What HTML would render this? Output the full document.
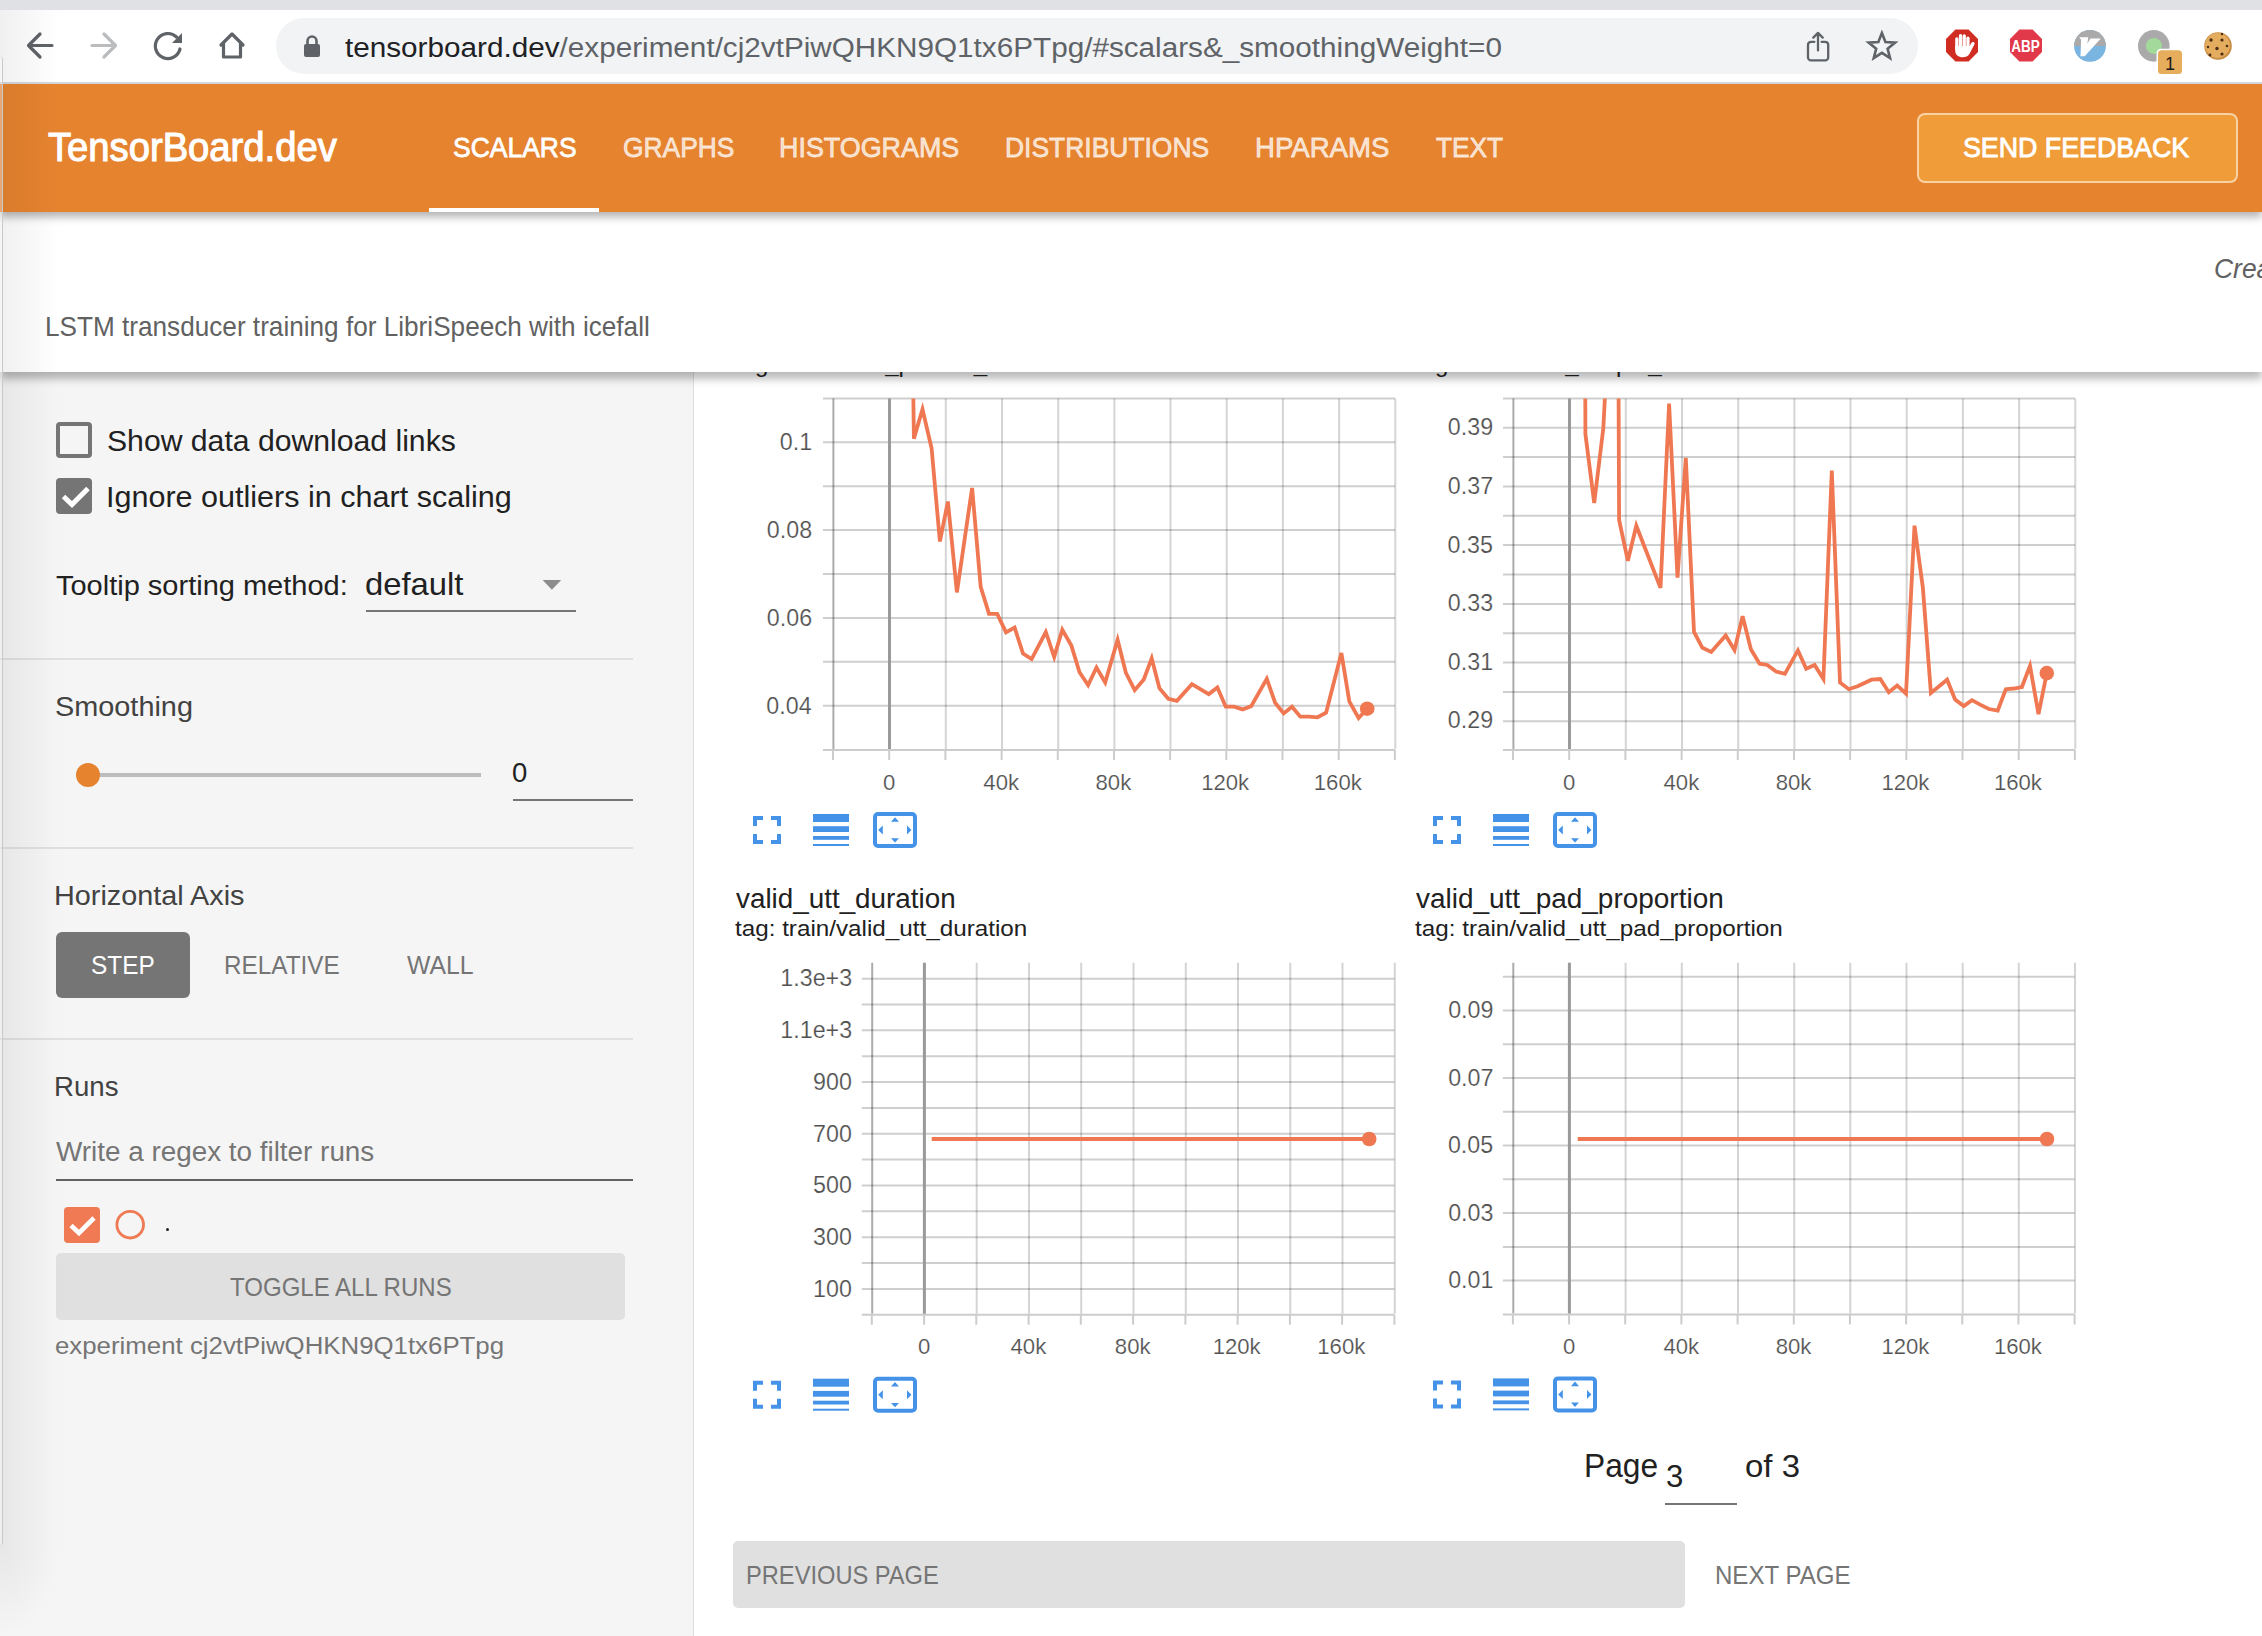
<!DOCTYPE html>
<html><head><meta charset="utf-8"><title>TensorBoard.dev</title>
<style>
html,body{margin:0;padding:0}
body{width:2262px;height:1636px;overflow:hidden;position:relative;background:#fff;font-family:"Liberation Sans",sans-serif}
.t{position:absolute;white-space:pre;transform-origin:0 0}
</style></head><body>
<svg style="position:absolute;left:0;top:0" width="2262" height="1636" viewBox="0 0 2262 1636"><line x1="833.4" y1="398.4" x2="833.4" y2="749.0" stroke="rgba(0,0,0,0.33)" stroke-width="2"/><line x1="833.0" y1="750.0" x2="833.0" y2="760.0" stroke="#cccccc" stroke-width="2"/><line x1="889.6" y1="398.4" x2="889.6" y2="749.0" stroke="rgba(0,0,0,0.17)" stroke-width="2"/><line x1="889.2" y1="750.0" x2="889.2" y2="760.0" stroke="#cccccc" stroke-width="2"/><line x1="945.8" y1="398.4" x2="945.8" y2="749.0" stroke="rgba(0,0,0,0.17)" stroke-width="2"/><line x1="945.4" y1="750.0" x2="945.4" y2="760.0" stroke="#cccccc" stroke-width="2"/><line x1="1002.0" y1="398.4" x2="1002.0" y2="749.0" stroke="rgba(0,0,0,0.17)" stroke-width="2"/><line x1="1001.6" y1="750.0" x2="1001.6" y2="760.0" stroke="#cccccc" stroke-width="2"/><line x1="1058.2" y1="398.4" x2="1058.2" y2="749.0" stroke="rgba(0,0,0,0.17)" stroke-width="2"/><line x1="1057.8" y1="750.0" x2="1057.8" y2="760.0" stroke="#cccccc" stroke-width="2"/><line x1="1114.4" y1="398.4" x2="1114.4" y2="749.0" stroke="rgba(0,0,0,0.17)" stroke-width="2"/><line x1="1114.0" y1="750.0" x2="1114.0" y2="760.0" stroke="#cccccc" stroke-width="2"/><line x1="1170.5" y1="398.4" x2="1170.5" y2="749.0" stroke="rgba(0,0,0,0.17)" stroke-width="2"/><line x1="1170.1" y1="750.0" x2="1170.1" y2="760.0" stroke="#cccccc" stroke-width="2"/><line x1="1226.7" y1="398.4" x2="1226.7" y2="749.0" stroke="rgba(0,0,0,0.17)" stroke-width="2"/><line x1="1226.3" y1="750.0" x2="1226.3" y2="760.0" stroke="#cccccc" stroke-width="2"/><line x1="1282.9" y1="398.4" x2="1282.9" y2="749.0" stroke="rgba(0,0,0,0.17)" stroke-width="2"/><line x1="1282.5" y1="750.0" x2="1282.5" y2="760.0" stroke="#cccccc" stroke-width="2"/><line x1="1339.1" y1="398.4" x2="1339.1" y2="749.0" stroke="rgba(0,0,0,0.17)" stroke-width="2"/><line x1="1338.7" y1="750.0" x2="1338.7" y2="760.0" stroke="#cccccc" stroke-width="2"/><line x1="1395.3" y1="398.4" x2="1395.3" y2="749.0" stroke="rgba(0,0,0,0.17)" stroke-width="2"/><line x1="1394.9" y1="750.0" x2="1394.9" y2="760.0" stroke="#cccccc" stroke-width="2"/><line x1="823.0" y1="398.4" x2="1395.0" y2="398.4" stroke="rgba(0,0,0,0.19)" stroke-width="2"/><line x1="823.0" y1="442.3" x2="1395.0" y2="442.3" stroke="rgba(0,0,0,0.19)" stroke-width="2"/><line x1="823.0" y1="486.2" x2="1395.0" y2="486.2" stroke="rgba(0,0,0,0.19)" stroke-width="2"/><line x1="823.0" y1="530.1" x2="1395.0" y2="530.1" stroke="rgba(0,0,0,0.19)" stroke-width="2"/><line x1="823.0" y1="574.0" x2="1395.0" y2="574.0" stroke="rgba(0,0,0,0.19)" stroke-width="2"/><line x1="823.0" y1="617.9" x2="1395.0" y2="617.9" stroke="rgba(0,0,0,0.19)" stroke-width="2"/><line x1="823.0" y1="661.8" x2="1395.0" y2="661.8" stroke="rgba(0,0,0,0.19)" stroke-width="2"/><line x1="823.0" y1="705.7" x2="1395.0" y2="705.7" stroke="rgba(0,0,0,0.19)" stroke-width="2"/><line x1="823.0" y1="750.0" x2="1395.0" y2="750.0" stroke="#cccccc" stroke-width="2"/><line x1="889.5" y1="398.4" x2="889.5" y2="749.0" stroke="#9a9a9a" stroke-width="3"/><clipPath id="clip32"><rect x="833" y="398.4" width="562" height="351.6"/></clipPath><polyline clip-path="url(#clip32)" points="912.0,300.0 913.9,438.6 922.5,409.2 931.6,448.4 939.9,541.5 947.9,501.5 956.9,592.4 972.1,487.9 980.7,586.8 989.0,613.9 997.2,613.9 1006.0,632.4 1014.6,627.5 1023.0,653.5 1031.6,659.1 1045.8,632.0 1054.2,656.9 1062.3,629.7 1071.4,645.6 1079.5,672.3 1088.1,685.1 1096.5,667.5 1105.2,682.5 1117.6,639.8 1125.9,672.9 1134.7,690.2 1143.8,679.5 1151.7,658.3 1159.4,688.2 1168.3,698.8 1176.9,700.8 1191.9,684.2 1208.8,694.1 1217.4,687.5 1225.7,706.7 1234.0,706.7 1242.6,709.4 1251.2,706.1 1266.8,678.9 1275.1,702.7 1283.7,713.4 1292.0,706.7 1300.3,716.7 1308.9,716.7 1317.5,717.3 1326.1,712.7 1341.4,653.0 1349.3,701.4 1358.6,718.0 1367.2,708.7" fill="none" stroke="#ef7852" stroke-width="3.8" stroke-linejoin="miter" stroke-miterlimit="4"/><circle cx="1367.2" cy="708.7" r="7.3" fill="#ef7852"/><path d="M753,816h10v4h-6v6h-4z M781,816h-10v4h6v6h4z M753,844h10v-4h-6v-6h-4z M781,844h-10v-4h6v-6h4z" fill="#4493e8"/><rect x="813" y="814" width="36" height="8" fill="#4493e8"/><rect x="813" y="826.2" width="36" height="5.8" fill="#4493e8"/><rect x="813" y="836" width="36" height="3.8" fill="#4493e8"/><rect x="813" y="844" width="36" height="2" fill="#4493e8"/><rect x="875" y="814" width="40" height="32" rx="3" fill="none" stroke="#4493e8" stroke-width="4"/><path d="M891,821.8l4,-4.6l4,4.6z M891,838.2l4,4.4l4,-4.4z M878.2,830l4.6,-4.5v9z M911.4,830l-4.4,-4.5v9z" fill="#4493e8"/><line x1="1513.4" y1="398.4" x2="1513.4" y2="749.0" stroke="rgba(0,0,0,0.33)" stroke-width="2"/><line x1="1513.0" y1="750.0" x2="1513.0" y2="760.0" stroke="#cccccc" stroke-width="2"/><line x1="1569.6" y1="398.4" x2="1569.6" y2="749.0" stroke="rgba(0,0,0,0.17)" stroke-width="2"/><line x1="1569.2" y1="750.0" x2="1569.2" y2="760.0" stroke="#cccccc" stroke-width="2"/><line x1="1625.8" y1="398.4" x2="1625.8" y2="749.0" stroke="rgba(0,0,0,0.17)" stroke-width="2"/><line x1="1625.4" y1="750.0" x2="1625.4" y2="760.0" stroke="#cccccc" stroke-width="2"/><line x1="1682.0" y1="398.4" x2="1682.0" y2="749.0" stroke="rgba(0,0,0,0.17)" stroke-width="2"/><line x1="1681.6" y1="750.0" x2="1681.6" y2="760.0" stroke="#cccccc" stroke-width="2"/><line x1="1738.2" y1="398.4" x2="1738.2" y2="749.0" stroke="rgba(0,0,0,0.17)" stroke-width="2"/><line x1="1737.8" y1="750.0" x2="1737.8" y2="760.0" stroke="#cccccc" stroke-width="2"/><line x1="1794.4" y1="398.4" x2="1794.4" y2="749.0" stroke="rgba(0,0,0,0.17)" stroke-width="2"/><line x1="1794.0" y1="750.0" x2="1794.0" y2="760.0" stroke="#cccccc" stroke-width="2"/><line x1="1850.5" y1="398.4" x2="1850.5" y2="749.0" stroke="rgba(0,0,0,0.17)" stroke-width="2"/><line x1="1850.1" y1="750.0" x2="1850.1" y2="760.0" stroke="#cccccc" stroke-width="2"/><line x1="1906.7" y1="398.4" x2="1906.7" y2="749.0" stroke="rgba(0,0,0,0.17)" stroke-width="2"/><line x1="1906.3" y1="750.0" x2="1906.3" y2="760.0" stroke="#cccccc" stroke-width="2"/><line x1="1962.9" y1="398.4" x2="1962.9" y2="749.0" stroke="rgba(0,0,0,0.17)" stroke-width="2"/><line x1="1962.5" y1="750.0" x2="1962.5" y2="760.0" stroke="#cccccc" stroke-width="2"/><line x1="2019.1" y1="398.4" x2="2019.1" y2="749.0" stroke="rgba(0,0,0,0.17)" stroke-width="2"/><line x1="2018.7" y1="750.0" x2="2018.7" y2="760.0" stroke="#cccccc" stroke-width="2"/><line x1="2075.3" y1="398.4" x2="2075.3" y2="749.0" stroke="rgba(0,0,0,0.17)" stroke-width="2"/><line x1="2074.9" y1="750.0" x2="2074.9" y2="760.0" stroke="#cccccc" stroke-width="2"/><line x1="1503.0" y1="398.4" x2="2075.0" y2="398.4" stroke="rgba(0,0,0,0.19)" stroke-width="2"/><line x1="1503.0" y1="427.8" x2="2075.0" y2="427.8" stroke="rgba(0,0,0,0.19)" stroke-width="2"/><line x1="1503.0" y1="457.1" x2="2075.0" y2="457.1" stroke="rgba(0,0,0,0.19)" stroke-width="2"/><line x1="1503.0" y1="486.4" x2="2075.0" y2="486.4" stroke="rgba(0,0,0,0.19)" stroke-width="2"/><line x1="1503.0" y1="515.8" x2="2075.0" y2="515.8" stroke="rgba(0,0,0,0.19)" stroke-width="2"/><line x1="1503.0" y1="545.1" x2="2075.0" y2="545.1" stroke="rgba(0,0,0,0.19)" stroke-width="2"/><line x1="1503.0" y1="574.5" x2="2075.0" y2="574.5" stroke="rgba(0,0,0,0.19)" stroke-width="2"/><line x1="1503.0" y1="603.9" x2="2075.0" y2="603.9" stroke="rgba(0,0,0,0.19)" stroke-width="2"/><line x1="1503.0" y1="633.2" x2="2075.0" y2="633.2" stroke="rgba(0,0,0,0.19)" stroke-width="2"/><line x1="1503.0" y1="662.5" x2="2075.0" y2="662.5" stroke="rgba(0,0,0,0.19)" stroke-width="2"/><line x1="1503.0" y1="691.9" x2="2075.0" y2="691.9" stroke="rgba(0,0,0,0.19)" stroke-width="2"/><line x1="1503.0" y1="721.2" x2="2075.0" y2="721.2" stroke="rgba(0,0,0,0.19)" stroke-width="2"/><line x1="1503.0" y1="750.0" x2="2075.0" y2="750.0" stroke="#cccccc" stroke-width="2"/><line x1="1569.5" y1="398.4" x2="1569.5" y2="749.0" stroke="#9a9a9a" stroke-width="3"/><clipPath id="clip72"><rect x="1513" y="398.4" width="562" height="351.6"/></clipPath><polyline clip-path="url(#clip72)" points="1585.0,300.0 1585.4,434.1 1594.2,503.1 1603.3,428.4 1610.0,300.0 1618.2,300.0 1619.1,520.0 1627.9,560.8 1636.3,525.7 1660.5,587.9 1669.1,403.6 1677.5,577.7 1685.8,457.8 1694.0,632.0 1702.4,647.8 1711.2,651.9 1725.7,635.4 1734.5,650.1 1742.6,616.2 1751.0,649.6 1759.6,663.7 1767.3,665.0 1776.1,671.6 1784.9,673.8 1797.9,650.4 1806.2,668.7 1814.6,665.0 1823.4,679.0 1831.8,470.5 1840.0,682.6 1848.8,689.2 1857.6,686.3 1871.5,679.7 1880.3,679.0 1888.8,692.2 1897.2,685.6 1906.0,693.6 1914.5,525.7 1922.9,588.0 1930.9,692.9 1947.1,679.7 1955.1,699.5 1963.7,706.1 1972.0,700.2 1980.1,704.6 1988.9,709.0 1997.7,710.5 2005.8,689.2 2013.8,688.5 2021.9,687.0 2030.0,665.8 2038.5,714.2 2046.8,673.1" fill="none" stroke="#ef7852" stroke-width="3.8" stroke-linejoin="miter" stroke-miterlimit="4"/><circle cx="2046.8" cy="673.1" r="7.3" fill="#ef7852"/><path d="M1433,816h10v4h-6v6h-4z M1461,816h-10v4h6v6h4z M1433,844h10v-4h-6v-6h-4z M1461,844h-10v-4h6v-6h4z" fill="#4493e8"/><rect x="1493" y="814" width="36" height="8" fill="#4493e8"/><rect x="1493" y="826.2" width="36" height="5.8" fill="#4493e8"/><rect x="1493" y="836" width="36" height="3.8" fill="#4493e8"/><rect x="1493" y="844" width="36" height="2" fill="#4493e8"/><rect x="1555" y="814" width="40" height="32" rx="3" fill="none" stroke="#4493e8" stroke-width="4"/><path d="M1571,821.8l4,-4.6l4,4.6z M1571,838.2l4,4.4l4,-4.4z M1558.2,830l4.6,-4.5v9z M1591.4,830l-4.4,-4.5v9z" fill="#4493e8"/><line x1="872.2" y1="962.8" x2="872.2" y2="1313.7" stroke="rgba(0,0,0,0.33)" stroke-width="2"/><line x1="871.8" y1="1314.7" x2="871.8" y2="1324.7" stroke="#cccccc" stroke-width="2"/><line x1="924.5" y1="962.8" x2="924.5" y2="1313.7" stroke="rgba(0,0,0,0.17)" stroke-width="2"/><line x1="924.1" y1="1314.7" x2="924.1" y2="1324.7" stroke="#cccccc" stroke-width="2"/><line x1="976.7" y1="962.8" x2="976.7" y2="1313.7" stroke="rgba(0,0,0,0.17)" stroke-width="2"/><line x1="976.3" y1="1314.7" x2="976.3" y2="1324.7" stroke="#cccccc" stroke-width="2"/><line x1="1029.0" y1="962.8" x2="1029.0" y2="1313.7" stroke="rgba(0,0,0,0.17)" stroke-width="2"/><line x1="1028.6" y1="1314.7" x2="1028.6" y2="1324.7" stroke="#cccccc" stroke-width="2"/><line x1="1081.2" y1="962.8" x2="1081.2" y2="1313.7" stroke="rgba(0,0,0,0.17)" stroke-width="2"/><line x1="1080.8" y1="1314.7" x2="1080.8" y2="1324.7" stroke="#cccccc" stroke-width="2"/><line x1="1133.5" y1="962.8" x2="1133.5" y2="1313.7" stroke="rgba(0,0,0,0.17)" stroke-width="2"/><line x1="1133.1" y1="1314.7" x2="1133.1" y2="1324.7" stroke="#cccccc" stroke-width="2"/><line x1="1185.8" y1="962.8" x2="1185.8" y2="1313.7" stroke="rgba(0,0,0,0.17)" stroke-width="2"/><line x1="1185.4" y1="1314.7" x2="1185.4" y2="1324.7" stroke="#cccccc" stroke-width="2"/><line x1="1238.0" y1="962.8" x2="1238.0" y2="1313.7" stroke="rgba(0,0,0,0.17)" stroke-width="2"/><line x1="1237.6" y1="1314.7" x2="1237.6" y2="1324.7" stroke="#cccccc" stroke-width="2"/><line x1="1290.3" y1="962.8" x2="1290.3" y2="1313.7" stroke="rgba(0,0,0,0.17)" stroke-width="2"/><line x1="1289.9" y1="1314.7" x2="1289.9" y2="1324.7" stroke="#cccccc" stroke-width="2"/><line x1="1342.5" y1="962.8" x2="1342.5" y2="1313.7" stroke="rgba(0,0,0,0.17)" stroke-width="2"/><line x1="1342.1" y1="1314.7" x2="1342.1" y2="1324.7" stroke="#cccccc" stroke-width="2"/><line x1="1394.8" y1="962.8" x2="1394.8" y2="1313.7" stroke="rgba(0,0,0,0.17)" stroke-width="2"/><line x1="1394.4" y1="1314.7" x2="1394.4" y2="1324.7" stroke="#cccccc" stroke-width="2"/><line x1="861.8" y1="1288.9" x2="1394.4" y2="1288.9" stroke="rgba(0,0,0,0.19)" stroke-width="2"/><line x1="861.8" y1="1263.0" x2="1394.4" y2="1263.0" stroke="rgba(0,0,0,0.19)" stroke-width="2"/><line x1="861.8" y1="1237.2" x2="1394.4" y2="1237.2" stroke="rgba(0,0,0,0.19)" stroke-width="2"/><line x1="861.8" y1="1211.3" x2="1394.4" y2="1211.3" stroke="rgba(0,0,0,0.19)" stroke-width="2"/><line x1="861.8" y1="1185.5" x2="1394.4" y2="1185.5" stroke="rgba(0,0,0,0.19)" stroke-width="2"/><line x1="861.8" y1="1159.6" x2="1394.4" y2="1159.6" stroke="rgba(0,0,0,0.19)" stroke-width="2"/><line x1="861.8" y1="1133.8" x2="1394.4" y2="1133.8" stroke="rgba(0,0,0,0.19)" stroke-width="2"/><line x1="861.8" y1="1107.9" x2="1394.4" y2="1107.9" stroke="rgba(0,0,0,0.19)" stroke-width="2"/><line x1="861.8" y1="1082.0" x2="1394.4" y2="1082.0" stroke="rgba(0,0,0,0.19)" stroke-width="2"/><line x1="861.8" y1="1056.2" x2="1394.4" y2="1056.2" stroke="rgba(0,0,0,0.19)" stroke-width="2"/><line x1="861.8" y1="1030.3" x2="1394.4" y2="1030.3" stroke="rgba(0,0,0,0.19)" stroke-width="2"/><line x1="861.8" y1="1004.5" x2="1394.4" y2="1004.5" stroke="rgba(0,0,0,0.19)" stroke-width="2"/><line x1="861.8" y1="978.7" x2="1394.4" y2="978.7" stroke="rgba(0,0,0,0.19)" stroke-width="2"/><line x1="861.8" y1="1314.7" x2="1394.4" y2="1314.7" stroke="#cccccc" stroke-width="2"/><line x1="924.4" y1="962.8" x2="924.4" y2="1313.7" stroke="#9a9a9a" stroke-width="3"/><clipPath id="clip113"><rect x="871.8" y="962.8" width="522.6000000000001" height="351.9000000000001"/></clipPath><polyline clip-path="url(#clip113)" points="931.7,1139.0 1369.2,1139.0" fill="none" stroke="#ef7852" stroke-width="3.8" stroke-linejoin="miter" stroke-miterlimit="4"/><circle cx="1369.2" cy="1139.0" r="7.3" fill="#ef7852"/><path d="M753,1380.7h10v4h-6v6h-4z M781,1380.7h-10v4h6v6h4z M753,1408.7h10v-4h-6v-6h-4z M781,1408.7h-10v-4h6v-6h4z" fill="#4493e8"/><rect x="813" y="1378.7" width="36" height="8" fill="#4493e8"/><rect x="813" y="1390.9" width="36" height="5.8" fill="#4493e8"/><rect x="813" y="1400.7" width="36" height="3.8" fill="#4493e8"/><rect x="813" y="1408.7" width="36" height="2" fill="#4493e8"/><rect x="875" y="1378.7" width="40" height="32" rx="3" fill="none" stroke="#4493e8" stroke-width="4"/><path d="M891,1386.5l4,-4.6l4,4.6z M891,1402.9l4,4.4l4,-4.4z M878.2,1394.7l4.6,-4.5v9z M911.4,1394.7l-4.4,-4.5v9z" fill="#4493e8"/><line x1="1513.3" y1="962.8" x2="1513.3" y2="1313.4" stroke="rgba(0,0,0,0.33)" stroke-width="2"/><line x1="1512.9" y1="1314.4" x2="1512.9" y2="1324.4" stroke="#cccccc" stroke-width="2"/><line x1="1569.5" y1="962.8" x2="1569.5" y2="1313.4" stroke="rgba(0,0,0,0.17)" stroke-width="2"/><line x1="1569.1" y1="1314.4" x2="1569.1" y2="1324.4" stroke="#cccccc" stroke-width="2"/><line x1="1625.6" y1="962.8" x2="1625.6" y2="1313.4" stroke="rgba(0,0,0,0.17)" stroke-width="2"/><line x1="1625.2" y1="1314.4" x2="1625.2" y2="1324.4" stroke="#cccccc" stroke-width="2"/><line x1="1681.8" y1="962.8" x2="1681.8" y2="1313.4" stroke="rgba(0,0,0,0.17)" stroke-width="2"/><line x1="1681.4" y1="1314.4" x2="1681.4" y2="1324.4" stroke="#cccccc" stroke-width="2"/><line x1="1738.0" y1="962.8" x2="1738.0" y2="1313.4" stroke="rgba(0,0,0,0.17)" stroke-width="2"/><line x1="1737.6" y1="1314.4" x2="1737.6" y2="1324.4" stroke="#cccccc" stroke-width="2"/><line x1="1794.2" y1="962.8" x2="1794.2" y2="1313.4" stroke="rgba(0,0,0,0.17)" stroke-width="2"/><line x1="1793.8" y1="1314.4" x2="1793.8" y2="1324.4" stroke="#cccccc" stroke-width="2"/><line x1="1850.3" y1="962.8" x2="1850.3" y2="1313.4" stroke="rgba(0,0,0,0.17)" stroke-width="2"/><line x1="1849.9" y1="1314.4" x2="1849.9" y2="1324.4" stroke="#cccccc" stroke-width="2"/><line x1="1906.5" y1="962.8" x2="1906.5" y2="1313.4" stroke="rgba(0,0,0,0.17)" stroke-width="2"/><line x1="1906.1" y1="1314.4" x2="1906.1" y2="1324.4" stroke="#cccccc" stroke-width="2"/><line x1="1962.7" y1="962.8" x2="1962.7" y2="1313.4" stroke="rgba(0,0,0,0.17)" stroke-width="2"/><line x1="1962.3" y1="1314.4" x2="1962.3" y2="1324.4" stroke="#cccccc" stroke-width="2"/><line x1="2018.8" y1="962.8" x2="2018.8" y2="1313.4" stroke="rgba(0,0,0,0.17)" stroke-width="2"/><line x1="2018.4" y1="1314.4" x2="2018.4" y2="1324.4" stroke="#cccccc" stroke-width="2"/><line x1="2075.0" y1="962.8" x2="2075.0" y2="1313.4" stroke="rgba(0,0,0,0.17)" stroke-width="2"/><line x1="2074.6" y1="1314.4" x2="2074.6" y2="1324.4" stroke="#cccccc" stroke-width="2"/><line x1="1502.9" y1="1280.6" x2="2074.6" y2="1280.6" stroke="rgba(0,0,0,0.19)" stroke-width="2"/><line x1="1502.9" y1="1246.9" x2="2074.6" y2="1246.9" stroke="rgba(0,0,0,0.19)" stroke-width="2"/><line x1="1502.9" y1="1213.1" x2="2074.6" y2="1213.1" stroke="rgba(0,0,0,0.19)" stroke-width="2"/><line x1="1502.9" y1="1179.3" x2="2074.6" y2="1179.3" stroke="rgba(0,0,0,0.19)" stroke-width="2"/><line x1="1502.9" y1="1145.6" x2="2074.6" y2="1145.6" stroke="rgba(0,0,0,0.19)" stroke-width="2"/><line x1="1502.9" y1="1111.8" x2="2074.6" y2="1111.8" stroke="rgba(0,0,0,0.19)" stroke-width="2"/><line x1="1502.9" y1="1078.0" x2="2074.6" y2="1078.0" stroke="rgba(0,0,0,0.19)" stroke-width="2"/><line x1="1502.9" y1="1044.2" x2="2074.6" y2="1044.2" stroke="rgba(0,0,0,0.19)" stroke-width="2"/><line x1="1502.9" y1="1010.5" x2="2074.6" y2="1010.5" stroke="rgba(0,0,0,0.19)" stroke-width="2"/><line x1="1502.9" y1="976.7" x2="2074.6" y2="976.7" stroke="rgba(0,0,0,0.19)" stroke-width="2"/><line x1="1502.9" y1="1314.4" x2="2074.6" y2="1314.4" stroke="#cccccc" stroke-width="2"/><line x1="1569.4" y1="962.8" x2="1569.4" y2="1313.4" stroke="#9a9a9a" stroke-width="3"/><clipPath id="clip151"><rect x="1512.9" y="962.8" width="561.6999999999998" height="351.60000000000014"/></clipPath><polyline clip-path="url(#clip151)" points="1577.7,1139.0 2047.0,1139.0" fill="none" stroke="#ef7852" stroke-width="3.8" stroke-linejoin="miter" stroke-miterlimit="4"/><circle cx="2047.0" cy="1139.0" r="7.3" fill="#ef7852"/><path d="M1433,1380.4h10v4h-6v6h-4z M1461,1380.4h-10v4h6v6h4z M1433,1408.4h10v-4h-6v-6h-4z M1461,1408.4h-10v-4h6v-6h4z" fill="#4493e8"/><rect x="1493" y="1378.4" width="36" height="8" fill="#4493e8"/><rect x="1493" y="1390.6000000000001" width="36" height="5.8" fill="#4493e8"/><rect x="1493" y="1400.4" width="36" height="3.8" fill="#4493e8"/><rect x="1493" y="1408.4" width="36" height="2" fill="#4493e8"/><rect x="1555" y="1378.4" width="40" height="32" rx="3" fill="none" stroke="#4493e8" stroke-width="4"/><path d="M1571,1386.2l4,-4.6l4,4.6z M1571,1402.6000000000001l4,4.4l4,-4.4z M1558.2,1394.4l4.6,-4.5v9z M1591.4,1394.4l-4.4,-4.5v9z" fill="#4493e8"/></svg>
<div style="position:absolute;left:1665px;top:1503px;width:72px;height:2px;background:#757575"></div>
<div style="position:absolute;left:733px;top:1541px;width:952px;height:67px;background:#e0e0e0;border-radius:5px"></div>
<div class="t" style="left:736.00px;top:320.14px;font-size:27.70px;line-height:27.70px;color:#212121;font-weight:400;transform:scaleX(1.0000);">valid_pruned_loss</div>
<div class="t" style="left:735.36px;top:352.95px;font-size:22.97px;line-height:22.97px;color:#212121;font-weight:400;transform:scaleX(1.0500);">tag: train/valid_pruned_loss</div>
<div class="t" style="left:779.85px;top:430.81px;font-size:23.25px;line-height:23.25px;color:#505050;font-weight:400;transform:scaleX(1.0000);-webkit-text-stroke:0.2px #fff;">0.1</div>
<div class="t" style="left:766.83px;top:518.81px;font-size:23.25px;line-height:23.25px;color:#505050;font-weight:400;transform:scaleX(1.0000);-webkit-text-stroke:0.2px #fff;">0.08</div>
<div class="t" style="left:766.83px;top:606.81px;font-size:23.25px;line-height:23.25px;color:#505050;font-weight:400;transform:scaleX(1.0000);-webkit-text-stroke:0.2px #fff;">0.06</div>
<div class="t" style="left:766.36px;top:694.81px;font-size:23.25px;line-height:23.25px;color:#505050;font-weight:400;transform:scaleX(1.0000);-webkit-text-stroke:0.2px #fff;">0.04</div>
<div class="t" style="left:883.00px;top:771.56px;font-size:22.13px;line-height:22.13px;color:#505050;font-weight:400;transform:scaleX(1.0000);-webkit-text-stroke:0.2px #fff;">0</div>
<div class="t" style="left:983.36px;top:771.56px;font-size:22.13px;line-height:22.13px;color:#505050;font-weight:400;transform:scaleX(1.0000);-webkit-text-stroke:0.2px #fff;">40k</div>
<div class="t" style="left:1095.54px;top:771.56px;font-size:22.13px;line-height:22.13px;color:#505050;font-weight:400;transform:scaleX(1.0000);-webkit-text-stroke:0.2px #fff;">80k</div>
<div class="t" style="left:1201.21px;top:771.56px;font-size:22.13px;line-height:22.13px;color:#505050;font-weight:400;transform:scaleX(1.0000);-webkit-text-stroke:0.2px #fff;">120k</div>
<div class="t" style="left:1313.81px;top:771.56px;font-size:22.13px;line-height:22.13px;color:#505050;font-weight:400;transform:scaleX(1.0000);-webkit-text-stroke:0.2px #fff;">160k</div>
<div class="t" style="left:1416.00px;top:320.14px;font-size:27.70px;line-height:27.70px;color:#212121;font-weight:400;transform:scaleX(1.0000);">valid_simple_loss</div>
<div class="t" style="left:1415.36px;top:352.95px;font-size:22.97px;line-height:22.97px;color:#212121;font-weight:400;transform:scaleX(1.0500);">tag: train/valid_simple_loss</div>
<div class="t" style="left:1447.83px;top:415.91px;font-size:23.25px;line-height:23.25px;color:#505050;font-weight:400;transform:scaleX(1.0000);-webkit-text-stroke:0.2px #fff;">0.39</div>
<div class="t" style="left:1447.83px;top:474.71px;font-size:23.25px;line-height:23.25px;color:#505050;font-weight:400;transform:scaleX(1.0000);-webkit-text-stroke:0.2px #fff;">0.37</div>
<div class="t" style="left:1447.59px;top:533.51px;font-size:23.25px;line-height:23.25px;color:#505050;font-weight:400;transform:scaleX(1.0000);-webkit-text-stroke:0.2px #fff;">0.35</div>
<div class="t" style="left:1447.83px;top:592.01px;font-size:23.25px;line-height:23.25px;color:#505050;font-weight:400;transform:scaleX(1.0000);-webkit-text-stroke:0.2px #fff;">0.33</div>
<div class="t" style="left:1447.83px;top:650.51px;font-size:23.25px;line-height:23.25px;color:#505050;font-weight:400;transform:scaleX(1.0000);-webkit-text-stroke:0.2px #fff;">0.31</div>
<div class="t" style="left:1447.83px;top:709.31px;font-size:23.25px;line-height:23.25px;color:#505050;font-weight:400;transform:scaleX(1.0000);-webkit-text-stroke:0.2px #fff;">0.29</div>
<div class="t" style="left:1563.00px;top:771.56px;font-size:22.13px;line-height:22.13px;color:#505050;font-weight:400;transform:scaleX(1.0000);-webkit-text-stroke:0.2px #fff;">0</div>
<div class="t" style="left:1663.56px;top:771.56px;font-size:22.13px;line-height:22.13px;color:#505050;font-weight:400;transform:scaleX(1.0000);-webkit-text-stroke:0.2px #fff;">40k</div>
<div class="t" style="left:1775.64px;top:771.56px;font-size:22.13px;line-height:22.13px;color:#505050;font-weight:400;transform:scaleX(1.0000);-webkit-text-stroke:0.2px #fff;">80k</div>
<div class="t" style="left:1881.41px;top:771.56px;font-size:22.13px;line-height:22.13px;color:#505050;font-weight:400;transform:scaleX(1.0000);-webkit-text-stroke:0.2px #fff;">120k</div>
<div class="t" style="left:1993.91px;top:771.56px;font-size:22.13px;line-height:22.13px;color:#505050;font-weight:400;transform:scaleX(1.0000);-webkit-text-stroke:0.2px #fff;">160k</div>
<div class="t" style="left:736.00px;top:884.54px;font-size:27.70px;line-height:27.70px;color:#212121;font-weight:400;transform:scaleX(1.0050);">valid_utt_duration</div>
<div class="t" style="left:735.36px;top:917.35px;font-size:22.97px;line-height:22.97px;color:#212121;font-weight:400;transform:scaleX(1.0547);">tag: train/valid_utt_duration</div>
<div class="t" style="left:780.32px;top:967.41px;font-size:23.25px;line-height:23.25px;color:#505050;font-weight:400;transform:scaleX(1.0000);-webkit-text-stroke:0.2px #fff;">1.3e+3</div>
<div class="t" style="left:780.32px;top:1019.11px;font-size:23.25px;line-height:23.25px;color:#505050;font-weight:400;transform:scaleX(1.0000);-webkit-text-stroke:0.2px #fff;">1.1e+3</div>
<div class="t" style="left:813.10px;top:1070.81px;font-size:23.25px;line-height:23.25px;color:#505050;font-weight:400;transform:scaleX(1.0000);-webkit-text-stroke:0.2px #fff;">900</div>
<div class="t" style="left:813.10px;top:1122.51px;font-size:23.25px;line-height:23.25px;color:#505050;font-weight:400;transform:scaleX(1.0000);-webkit-text-stroke:0.2px #fff;">700</div>
<div class="t" style="left:813.10px;top:1174.21px;font-size:23.25px;line-height:23.25px;color:#505050;font-weight:400;transform:scaleX(1.0000);-webkit-text-stroke:0.2px #fff;">500</div>
<div class="t" style="left:813.10px;top:1225.91px;font-size:23.25px;line-height:23.25px;color:#505050;font-weight:400;transform:scaleX(1.0000);-webkit-text-stroke:0.2px #fff;">300</div>
<div class="t" style="left:813.10px;top:1277.71px;font-size:23.25px;line-height:23.25px;color:#505050;font-weight:400;transform:scaleX(1.0000);-webkit-text-stroke:0.2px #fff;">100</div>
<div class="t" style="left:917.90px;top:1336.26px;font-size:22.13px;line-height:22.13px;color:#505050;font-weight:400;transform:scaleX(1.0000);-webkit-text-stroke:0.2px #fff;">0</div>
<div class="t" style="left:1010.56px;top:1336.26px;font-size:22.13px;line-height:22.13px;color:#505050;font-weight:400;transform:scaleX(1.0000);-webkit-text-stroke:0.2px #fff;">40k</div>
<div class="t" style="left:1114.84px;top:1336.26px;font-size:22.13px;line-height:22.13px;color:#505050;font-weight:400;transform:scaleX(1.0000);-webkit-text-stroke:0.2px #fff;">80k</div>
<div class="t" style="left:1212.71px;top:1336.26px;font-size:22.13px;line-height:22.13px;color:#505050;font-weight:400;transform:scaleX(1.0000);-webkit-text-stroke:0.2px #fff;">120k</div>
<div class="t" style="left:1317.31px;top:1336.26px;font-size:22.13px;line-height:22.13px;color:#505050;font-weight:400;transform:scaleX(1.0000);-webkit-text-stroke:0.2px #fff;">160k</div>
<div class="t" style="left:1416.00px;top:884.54px;font-size:27.70px;line-height:27.70px;color:#212121;font-weight:400;transform:scaleX(1.0097);">valid_utt_pad_proportion</div>
<div class="t" style="left:1415.36px;top:917.35px;font-size:22.97px;line-height:22.97px;color:#212121;font-weight:400;transform:scaleX(1.0551);">tag: train/valid_utt_pad_proportion</div>
<div class="t" style="left:1448.13px;top:999.31px;font-size:23.25px;line-height:23.25px;color:#505050;font-weight:400;transform:scaleX(1.0000);-webkit-text-stroke:0.2px #fff;">0.09</div>
<div class="t" style="left:1448.13px;top:1066.61px;font-size:23.25px;line-height:23.25px;color:#505050;font-weight:400;transform:scaleX(1.0000);-webkit-text-stroke:0.2px #fff;">0.07</div>
<div class="t" style="left:1447.89px;top:1134.21px;font-size:23.25px;line-height:23.25px;color:#505050;font-weight:400;transform:scaleX(1.0000);-webkit-text-stroke:0.2px #fff;">0.05</div>
<div class="t" style="left:1448.13px;top:1201.81px;font-size:23.25px;line-height:23.25px;color:#505050;font-weight:400;transform:scaleX(1.0000);-webkit-text-stroke:0.2px #fff;">0.03</div>
<div class="t" style="left:1448.13px;top:1269.41px;font-size:23.25px;line-height:23.25px;color:#505050;font-weight:400;transform:scaleX(1.0000);-webkit-text-stroke:0.2px #fff;">0.01</div>
<div class="t" style="left:1562.90px;top:1335.96px;font-size:22.13px;line-height:22.13px;color:#505050;font-weight:400;transform:scaleX(1.0000);-webkit-text-stroke:0.2px #fff;">0</div>
<div class="t" style="left:1663.46px;top:1335.96px;font-size:22.13px;line-height:22.13px;color:#505050;font-weight:400;transform:scaleX(1.0000);-webkit-text-stroke:0.2px #fff;">40k</div>
<div class="t" style="left:1775.64px;top:1335.96px;font-size:22.13px;line-height:22.13px;color:#505050;font-weight:400;transform:scaleX(1.0000);-webkit-text-stroke:0.2px #fff;">80k</div>
<div class="t" style="left:1881.41px;top:1335.96px;font-size:22.13px;line-height:22.13px;color:#505050;font-weight:400;transform:scaleX(1.0000);-webkit-text-stroke:0.2px #fff;">120k</div>
<div class="t" style="left:1993.91px;top:1335.96px;font-size:22.13px;line-height:22.13px;color:#505050;font-weight:400;transform:scaleX(1.0000);-webkit-text-stroke:0.2px #fff;">160k</div>
<div class="t" style="left:1583.96px;top:1449.73px;font-size:32.68px;line-height:32.68px;color:#212121;font-weight:400;transform:scaleX(0.9707);">Page</div>
<div class="t" style="left:1665.56px;top:1461.17px;font-size:31.69px;line-height:31.69px;color:#212121;font-weight:400;transform:scaleX(0.9802);">3</div>
<div class="t" style="left:1744.98px;top:1450.85px;font-size:31.35px;line-height:31.35px;color:#212121;font-weight:400;transform:scaleX(1.0512);">of 3</div>
<div class="t" style="left:746.11px;top:1562.02px;font-size:26.20px;line-height:26.20px;color:#757575;font-weight:400;transform:scaleX(0.9032);">PREVIOUS PAGE</div>
<div class="t" style="left:1714.57px;top:1562.02px;font-size:26.20px;line-height:26.20px;color:#757575;font-weight:400;transform:scaleX(0.9186);">NEXT PAGE</div>
<div style="position:absolute;left:0px;top:372px;width:694px;height:1264px;background:#f5f5f5;border-right:1px solid #dedede;box-sizing:border-box"></div>
<div style="position:absolute;left:56px;top:422px;width:36px;height:36px;border:4px solid #757575;border-radius:4px;box-sizing:border-box"></div>
<div style="position:absolute;left:56px;top:478px;width:36px;height:36px;background:#757575;border-radius:4px"></div>
<svg style="position:absolute;left:56px;top:478px" width="36" height="36"><path d="M7.5,18.5 L16,26.5 L32,10.5" fill="none" stroke="#fff" stroke-width="5"/></svg>
<div style="position:absolute;left:366px;top:610px;width:210px;height:2px;background:#757575"></div>
<svg style="position:absolute;left:540px;top:578px" width="24" height="14"><path d="M2.6,2 L21.2,2 L11.9,11.7z" fill="#8c8c8c"/></svg>
<div style="position:absolute;left:0px;top:658px;width:633px;height:2px;background:#e0e0e0"></div>
<div style="position:absolute;left:100px;top:773px;width:381px;height:4px;background:#bdbdbd"></div>
<div style="position:absolute;left:76px;top:763px;width:24px;height:24px;background:#e6832f;border-radius:50%"></div>
<div style="position:absolute;left:513px;top:799px;width:120px;height:2px;background:#757575"></div>
<div style="position:absolute;left:0px;top:847px;width:633px;height:2px;background:#e0e0e0"></div>
<div style="position:absolute;left:56px;top:932px;width:134px;height:66px;background:#757575;border-radius:6px"></div>
<div style="position:absolute;left:0px;top:1038px;width:633px;height:2px;background:#e0e0e0"></div>
<div style="position:absolute;left:56px;top:1179px;width:577px;height:2px;background:#616161"></div>
<div style="position:absolute;left:64px;top:1207px;width:36px;height:36px;background:#ef7a53;border-radius:4px"></div>
<svg style="position:absolute;left:64px;top:1207px" width="36" height="36"><path d="M7,18.5 L15,26 L30,11" fill="none" stroke="#fff" stroke-width="4.6"/></svg>
<svg style="position:absolute;left:112px;top:1206px" width="38" height="38"><circle cx="18.2" cy="18.7" r="13.3" fill="none" stroke="#ef7a53" stroke-width="2.8"/></svg>
<div style="position:absolute;left:166px;top:1228px;width:3px;height:3px;background:#212121;border-radius:50%"></div>
<div style="position:absolute;left:56px;top:1253px;width:569px;height:67px;background:#e0e0e0;border-radius:5px"></div>
<div class="t" style="left:106.99px;top:425.76px;font-size:30.28px;line-height:30.28px;color:#212121;font-weight:400;transform:scaleX(0.9967);">Show data download links</div>
<div class="t" style="left:105.75px;top:482.46px;font-size:29.58px;line-height:29.58px;color:#212121;font-weight:400;transform:scaleX(1.0326);">Ignore outliers in chart scaling</div>
<div class="t" style="left:55.82px;top:572.37px;font-size:28.03px;line-height:28.03px;color:#212121;font-weight:400;transform:scaleX(1.0349);">Tooltip sorting method:</div>
<div class="t" style="left:365.49px;top:568.98px;font-size:31.08px;line-height:31.08px;color:#212121;font-weight:400;transform:scaleX(1.0554);">default</div>
<div class="t" style="left:54.96px;top:692.87px;font-size:28.03px;line-height:28.03px;color:#424242;font-weight:400;transform:scaleX(1.0299);">Smoothing</div>
<div class="t" style="left:512.40px;top:759.38px;font-size:27.18px;line-height:27.18px;color:#212121;font-weight:400;transform:scaleX(1.0117);">0</div>
<div class="t" style="left:54.09px;top:881.57px;font-size:28.03px;line-height:28.03px;color:#424242;font-weight:400;transform:scaleX(1.0281);">Horizontal Axis</div>
<div class="t" style="left:91.08px;top:952.12px;font-size:26.20px;line-height:26.20px;color:#ffffff;font-weight:400;transform:scaleX(0.9307);">STEP</div>
<div class="t" style="left:223.76px;top:952.12px;font-size:26.20px;line-height:26.20px;color:#757575;font-weight:400;transform:scaleX(0.9272);">RELATIVE</div>
<div class="t" style="left:407.40px;top:952.12px;font-size:26.20px;line-height:26.20px;color:#757575;font-weight:400;transform:scaleX(0.9478);">WALL</div>
<div class="t" style="left:54.19px;top:1072.96px;font-size:27.32px;line-height:27.32px;color:#424242;font-weight:400;transform:scaleX(1.0106);">Runs</div>
<div class="t" style="left:56.40px;top:1138.17px;font-size:28.03px;line-height:28.03px;color:#757575;font-weight:400;transform:scaleX(0.9939);">Write a regex to filter runs</div>
<div class="t" style="left:229.92px;top:1274.63px;font-size:25.35px;line-height:25.35px;color:#757575;font-weight:400;transform:scaleX(0.9482);">TOGGLE ALL RUNS</div>
<div class="t" style="left:55.37px;top:1333.87px;font-size:24.37px;line-height:24.37px;color:#757575;font-weight:400;transform:scaleX(1.0598);">experiment cj2vtPiwQHKN9Q1tx6PTpg</div>
<div style="position:absolute;left:0px;top:212px;width:2262px;height:160px;background:#fff;box-shadow:0 7px 8px rgba(0,0,0,0.27)"></div>
<div class="t" style="left:45.11px;top:314.14px;font-size:26.76px;line-height:26.76px;color:#616161;font-weight:400;transform:scaleX(0.9778);">LSTM transducer training for LibriSpeech with icefall</div>
<div class="t" style="left:2214.18px;top:254.11px;font-size:28.45px;line-height:28.45px;color:#616161;font-weight:400;font-style:italic;transform:scaleX(0.9300);">Created by</div>
<div style="position:absolute;left:0px;top:84px;width:2262px;height:128px;background:#e6832f;box-shadow:0 5px 8px rgba(0,0,0,0.3)"></div>
<div style="position:absolute;left:429px;top:208px;width:170px;height:4px;background:#fff"></div>
<div style="position:absolute;left:1917px;top:113px;width:321px;height:70px;background:#f09c38;border:2px solid rgba(255,255,255,0.55);border-radius:8px;box-sizing:border-box"></div>
<div class="t" style="left:48.24px;top:127.43px;font-size:40.00px;line-height:40.00px;color:#ffffff;font-weight:400;transform:scaleX(0.9549);-webkit-text-stroke:1.1px #fff;">TensorBoard.dev</div>
<div class="t" style="left:452.68px;top:133.45px;font-size:28.17px;line-height:28.17px;color:#ffffff;font-weight:400;transform:scaleX(0.9399);-webkit-text-stroke:0.8px #ffffff;">SCALARS</div>
<div class="t" style="left:622.68px;top:133.45px;font-size:28.17px;line-height:28.17px;color:rgba(255,255,255,0.72);font-weight:400;transform:scaleX(0.9369);-webkit-text-stroke:0.8px rgba(255,255,255,0.72);">GRAPHS</div>
<div class="t" style="left:778.85px;top:133.45px;font-size:28.17px;line-height:28.17px;color:rgba(255,255,255,0.72);font-weight:400;transform:scaleX(0.9549);-webkit-text-stroke:0.8px rgba(255,255,255,0.72);">HISTOGRAMS</div>
<div class="t" style="left:1004.88px;top:133.45px;font-size:28.17px;line-height:28.17px;color:rgba(255,255,255,0.72);font-weight:400;transform:scaleX(0.9389);-webkit-text-stroke:0.8px rgba(255,255,255,0.72);">DISTRIBUTIONS</div>
<div class="t" style="left:1254.79px;top:133.45px;font-size:28.17px;line-height:28.17px;color:rgba(255,255,255,0.72);font-weight:400;transform:scaleX(0.9791);-webkit-text-stroke:0.8px rgba(255,255,255,0.72);">HPARAMS</div>
<div class="t" style="left:1436.47px;top:133.45px;font-size:28.17px;line-height:28.17px;color:rgba(255,255,255,0.72);font-weight:400;transform:scaleX(0.9335);-webkit-text-stroke:0.8px rgba(255,255,255,0.72);">TEXT</div>
<div class="t" style="left:1963.16px;top:133.45px;font-size:28.17px;line-height:28.17px;color:#ffffff;font-weight:400;transform:scaleX(0.9510);-webkit-text-stroke:0.9px #fff;">SEND FEEDBACK</div>
<div style="position:absolute;left:0px;top:0px;width:2262px;height:10px;background:#e0e1e5"></div>
<div style="position:absolute;left:0px;top:10px;width:2262px;height:72px;background:#ffffff"></div>
<div style="position:absolute;left:0px;top:82px;width:2262px;height:2px;background:#d3d7db"></div>
<div style="position:absolute;left:276px;top:18px;width:1642px;height:56px;background:#f1f3f4;border-radius:28px"></div>
<svg style="position:absolute;left:0;top:0" width="2262" height="84">
<path d="M52,45.5 H29 M40,34 L28.5,45.5 L40,57" fill="none" stroke="#5f6368" stroke-width="3.2" stroke-linecap="round" stroke-linejoin="round"/>
<path d="M92,45.5 H115 M104,34 L115.5,45.5 L104,57" fill="none" stroke="#babcbe" stroke-width="3.2" stroke-linecap="round" stroke-linejoin="round"/>
<path d="M180,49 A12.5,12.5 0 1 1 176.5,37" fill="none" stroke="#5f6368" stroke-width="3.2" stroke-linecap="round"/>
<path d="M182,33 V43 H172 Z" fill="#5f6368"/>
<path d="M221,45 L232,34 L243,45 M223.5,43 V57 H240.5 V43" fill="none" stroke="#5f6368" stroke-width="3.2" stroke-linejoin="round" stroke-linecap="round"/>
<rect x="304" y="44" width="16" height="13" rx="2" fill="#5f6368"/>
<path d="M307.5,44 V41 A4.5,4.5 0 0 1 316.5,41 V44" fill="none" stroke="#5f6368" stroke-width="2.6"/>
<path d="M1818,33.5 V50.4 M1813.3,37.6 L1818,32.9 L1822.7,37.6 M1814.4,41.8 H1811 a3,3 0 0 0 -3,3 V57.4 a3,3 0 0 0 3,3 H1825.2 a3,3 0 0 0 3,-3 V44.8 a3,3 0 0 0 -3,-3 H1821.6" fill="none" stroke="#5f6368" stroke-width="2.3" stroke-linejoin="round" stroke-linecap="round"/>
<path d="M1881.90,33.00 L1885.43,42.05 L1895.12,42.60 L1887.61,48.75 L1890.07,58.15 L1881.90,52.90 L1873.73,58.15 L1876.19,48.75 L1868.68,42.60 L1878.37,42.05 Z" fill="none" stroke="#5f6368" stroke-width="2.6" stroke-linejoin="miter"/>
<path d="M1955.4,29.5 H1968.6 L1978,38.9 V52.1 L1968.6,61.5 H1955.4 L1946,52.1 V38.9 Z" fill="#d12c22"/>
<g fill="#fff"><rect x="1955.2" y="37.2" width="3.3" height="13" rx="1.65"/><rect x="1958.9" y="34" width="3.3" height="15" rx="1.65"/><rect x="1962.6" y="34.2" width="3.3" height="15" rx="1.65"/><rect x="1966.3" y="36.6" width="3.3" height="13" rx="1.65"/><path d="M1955.2,46 H1969.6 L1971.6,42.6 a1.7,1.7 0 0 1 3,1.4 L1969.4,54 C1968,56.2 1965.8,57.3 1962.5,57.3 C1958.6,57.3 1955.2,55 1955.2,50.5 Z"/></g>
<path d="M2019.4,29.5 H2032.6 L2042,38.9 V52.1 L2032.6,61.5 H2019.4 L2010,52.1 V38.9 Z" fill="#e2394a"/>
<text x="2011.3" y="52.2" font-family="Liberation Sans" font-weight="bold" font-size="16" fill="#fff" textLength="28.5" lengthAdjust="spacingAndGlyphs">ABP</text>
<circle cx="2090" cy="45.9" r="15.9" fill="#7ab4e0"/>
<path d="M2074.1,46 A15.9,15.9 0 0 1 2105.9,46 Z" fill="#aaaaaa"/>
<path d="M2079.2,37.3 L2088.3,37.3 L2087.3,43.8 L2090.5,38.5 L2100.8,38.5 L2084.7,56.2 L2080.5,56.2 L2081.1,39.7 Z" fill="#fff"/>
<circle cx="2153.8" cy="45.9" r="15.8" fill="#aaaaaa"/>
<circle cx="2153.9" cy="45.9" r="8" fill="#a3d99b"/>
<rect x="2156.5" y="48.7" width="27" height="26.7" rx="4.5" fill="#fff"/>
<rect x="2158" y="50.2" width="24" height="23.7" rx="3.5" fill="#e6ad5c"/>
<text x="2170" y="70.2" font-family="Liberation Sans" font-size="18" fill="#1a1a1a" text-anchor="middle">1</text>
<circle cx="2218" cy="46" r="13.8" fill="#c98c42"/><circle cx="2217.5" cy="45.5" r="12.4" fill="#e3ac5e"/>
<g fill="#4a2d14"><circle cx="2211" cy="40" r="1.7"/><circle cx="2222" cy="40" r="1.6"/><circle cx="2227" cy="46" r="1.3"/><circle cx="2217" cy="48.5" r="1.7"/><circle cx="2222" cy="54" r="1.6"/><circle cx="2208" cy="47" r="1.2"/><circle cx="2210" cy="55" r="1.4"/><circle cx="2222" cy="34" r="1.2"/></g>
</svg>
<div class="t" style="left:344.70px;top:32.78px;font-size:28.37px;line-height:28.37px;color:#5f6368;font-weight:400;transform:scaleX(1.0467);"><span style="color:#202124">tensorboard.dev</span><span style="color:#5f6368">/experiment/cj2vtPiwQHKN9Q1tx6PTpg/#scalars&amp;_smoothingWeight=0</span></div>
<div style="position:absolute;left:0;top:10px;width:60px;height:1535px;background:linear-gradient(to right,rgba(0,0,0,0.06),rgba(0,0,0,0))"></div>
<div style="position:absolute;left:0;top:1545px;width:100px;height:91px;background:radial-gradient(ellipse 60px 91px at 0 0,rgba(0,0,0,0.06),rgba(0,0,0,0))"></div>
<div style="position:absolute;left:0;top:57px;width:2px;height:1488px;background:rgba(255,255,255,0.35);border-right:1px solid #c9c9c9;border-bottom-right-radius:4px;border-top-right-radius:4px"></div>
</body></html>
